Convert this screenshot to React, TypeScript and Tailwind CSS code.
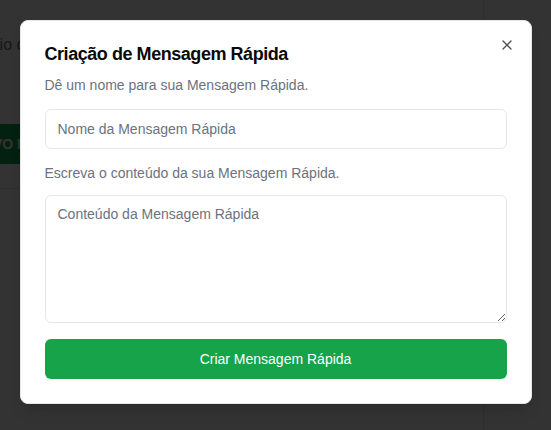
import { X } from "lucide-react";

function BackgroundPage() {
  return (
    <div className="flex h-full">
      <div className="w-[484px] border-r border-gray-200">
        <div className="border-b border-gray-200 pb-6">
          <p className="-ml-[28px] pt-[33px] text-base leading-6 whitespace-nowrap text-gray-500">
            Envio com mensagens rápidas cadastradas
          </p>
          <button className="-ml-[44px] mt-[67px] h-10 rounded-md bg-[#16a34a] px-4 text-sm font-bold uppercase text-white">
            Novo Modelo
          </button>
        </div>
      </div>
      <div className="flex-1" />
    </div>
  );
}

function QuickMessageDialog() {
  return (
    <div className="absolute left-1/2 top-[20px] w-[512px] -translate-x-1/2 rounded-lg border border-gray-200 bg-white p-6 shadow-lg">
      <button className="absolute right-4 top-4 text-[#0a0a0a] opacity-70">
        <X size={16} strokeWidth={2} />
      </button>

      <h2 className="text-lg leading-none font-semibold tracking-tight text-[#0a0a0a]">
        Criação de Mensagem Rápida
      </h2>
      <p className="mt-3 text-sm leading-5 text-[#6b7280]">
        Dê um nome para sua Mensagem Rápida.
      </p>
      <input
        className="mt-[14px] block h-10 w-full rounded-md border border-[#e5e7eb] bg-white px-3 py-2 text-sm outline-none placeholder:text-[#6b7280]"
        placeholder="Nome da Mensagem Rápida"
      />

      <p className="mt-[14px] text-sm leading-5 text-[#6b7280]">
        Escreva o conteúdo da sua Mensagem Rápida.
      </p>
      <textarea
        className="mt-3 block h-32 w-full rounded-md border border-[#e5e7eb] bg-white px-3 py-2 text-sm leading-5 outline-none placeholder:text-[#6b7280]"
        placeholder="Conteúdo da Mensagem Rápida"
      />

      <button className="mt-4 flex h-10 w-full items-center justify-center rounded-md bg-[#16a34a] text-sm text-white">
        Criar Mensagem Rápida
      </button>
    </div>
  );
}

export default function App() {
  return (
    <div className="relative h-[430px] w-full overflow-hidden bg-white font-['Liberation_Sans',Arial,sans-serif]">
      <BackgroundPage />
      <div className="absolute inset-0 bg-black/80" />
      <QuickMessageDialog />
    </div>
  );
}
